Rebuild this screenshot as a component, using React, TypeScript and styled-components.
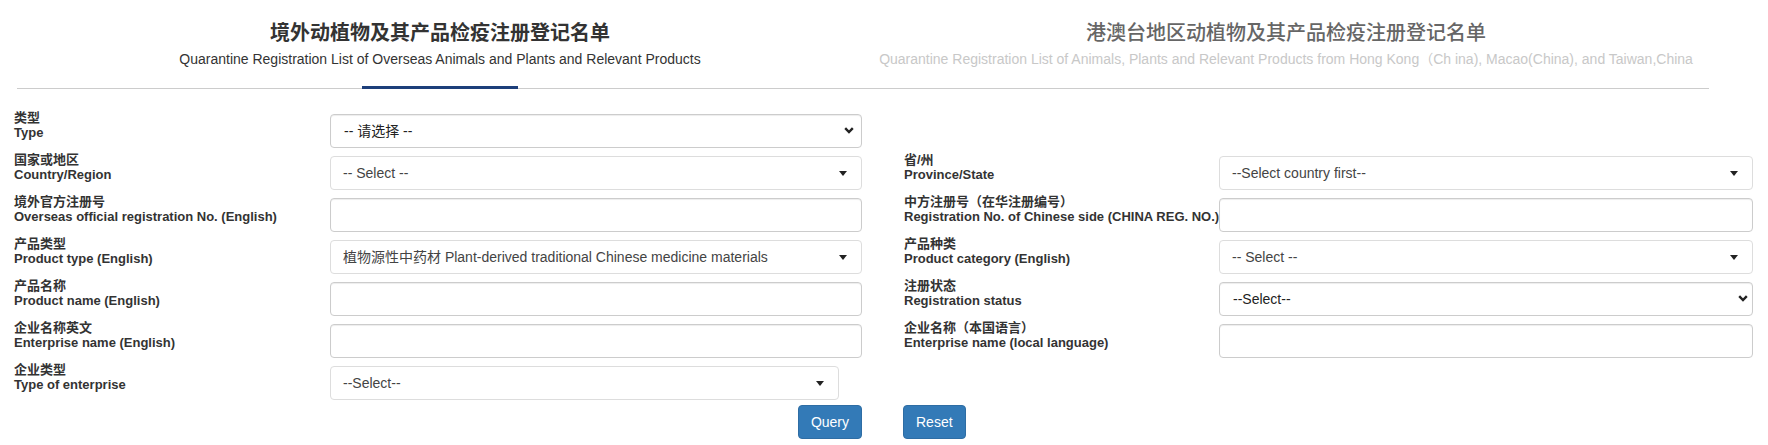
import styled, { createGlobalStyle } from 'styled-components';

const GlobalStyle = createGlobalStyle`
    * { box-sizing: border-box; }
    body {
        margin: 0;
        background: #fff;
        color: #333;
        font-family: "Liberation Sans", "Noto Sans CJK SC", sans-serif;
    }
`;

const Chevron = () => (
    <svg width="10" height="7" viewBox="0 0 10 7">
        <polyline points="1.2,1.2 5,5 8.8,1.2" fill="none" stroke="#222" strokeWidth="2.4" />
    </svg>
);

export default function App() {
    return (
        <Page>
            <GlobalStyle />
            <TabBar>
                <Tab active>
                    <TabTitle active>境外动植物及其产品检疫注册登记名单</TabTitle>
                    <TabSub active>Quarantine Registration List of Overseas Animals and Plants and Relevant Products</TabSub>
                </Tab>
                <Tab>
                    <TabTitle>港澳台地区动植物及其产品检疫注册登记名单</TabTitle>
                    <TabSub>
                        Quarantine Registration List of Animals, Plants and Relevant Products from Hong Kong（Ch ina), Macao(China), and Taiwan,China
                    </TabSub>
                </Tab>
            </TabBar>

            <Form>
                <Row>
                    <Field side="left">
                        <Label zh="类型" en="Type" />
                        <Control>
                            <NativeSelect defaultValue="">
                                <option value="">-- 请选择 --</option>
                            </NativeSelect>
                            <ChevronSlot right={8}>
                                <Chevron />
                            </ChevronSlot>
                        </Control>
                    </Field>
                    <Field side="right" />
                </Row>

                <Row>
                    <Field side="left">
                        <Label zh="国家或地区" en="Country/Region" />
                        <Control>
                            <ComboBox>-- Select --</ComboBox>
                        </Control>
                    </Field>
                    <Field side="right">
                        <Label zh="省/州" en="Province/State" />
                        <Control>
                            <ComboBox>--Select country first--</ComboBox>
                        </Control>
                    </Field>
                </Row>

                <Row>
                    <Field side="left">
                        <Label zh="境外官方注册号" en="Overseas official registration No. (English)" />
                        <Control>
                            <TextInput />
                        </Control>
                    </Field>
                    <Field side="right">
                        <Label zh="中方注册号（在华注册编号）" en="Registration No. of Chinese side (CHINA REG. NO.)" />
                        <Control>
                            <TextInput />
                        </Control>
                    </Field>
                </Row>

                <Row>
                    <Field side="left">
                        <Label zh="产品类型" en="Product type (English)" />
                        <Control>
                            <ComboBox>植物源性中药材 Plant-derived traditional Chinese medicine materials</ComboBox>
                        </Control>
                    </Field>
                    <Field side="right">
                        <Label zh="产品种类" en="Product category (English)" />
                        <Control>
                            <ComboBox>-- Select --</ComboBox>
                        </Control>
                    </Field>
                </Row>

                <Row>
                    <Field side="left">
                        <Label zh="产品名称" en="Product name (English)" />
                        <Control>
                            <TextInput />
                        </Control>
                    </Field>
                    <Field side="right">
                        <Label zh="注册状态" en="Registration status" />
                        <Control>
                            <NativeSelect defaultValue="">
                                <option value="">--Select--</option>
                            </NativeSelect>
                            <ChevronSlot right={5}>
                                <Chevron />
                            </ChevronSlot>
                        </Control>
                    </Field>
                </Row>

                <Row>
                    <Field side="left">
                        <Label zh="企业名称英文" en="Enterprise name (English)" />
                        <Control>
                            <TextInput />
                        </Control>
                    </Field>
                    <Field side="right">
                        <Label zh="企业名称（本国语言）" en="Enterprise name (local language)" />
                        <Control>
                            <TextInput />
                        </Control>
                    </Field>
                </Row>

                <Row>
                    <Field side="left">
                        <Label zh="企业类型" en="Type of enterprise" />
                        <Control width={509}>
                            <ComboBox>--Select--</ComboBox>
                        </Control>
                    </Field>
                    <Field side="right" />
                </Row>

                <ButtonRow>
                    <ButtonSlot side="left">
                        <Button type="button">Query</Button>
                    </ButtonSlot>
                    <ButtonSlot side="right">
                        <Button type="button">Reset</Button>
                    </ButtonSlot>
                </ButtonRow>
            </Form>
        </Page>
    );
}

const Label = ({ zh, en }: { zh: string; en: string }) => (
    <LabelWrap>
        <LabelLine>{zh}</LabelLine>
        <LabelLine>{en}</LabelLine>
    </LabelWrap>
);

const Page = styled.div`
    width: 1768px;
`;

const TabBar = styled.div`
    display: grid;
    grid-template-columns: 1fr 1fr;
    margin: 0 59px 0 17px;
    border-bottom: 1px solid #ccc;
`;

const Tab = styled.div<{ active?: boolean }>`
    position: relative;
    height: 88px;
    padding-top: 20px;
    text-align: center;
    white-space: nowrap;

    &::after {
        content: '';
        display: ${(p) => (p.active ? 'block' : 'none')};
        position: absolute;
        left: 50%;
        bottom: -1px;
        width: 156px;
        height: 3px;
        margin-left: -78px;
        background: #1d3f7a;
    }
`;

const TabTitle = styled.div<{ active?: boolean }>`
    font-family: "Noto Sans CJK SC", sans-serif;
    font-size: 20px;
    line-height: 24px;
    font-weight: ${(p) => (p.active ? 700 : 500)};
    color: ${(p) => (p.active ? '#333' : '#666')};
`;

const TabSub = styled.div<{ active?: boolean }>`
    margin-top: 5px;
    font-size: 14px;
    line-height: 20px;
    color: ${(p) => (p.active ? '#333' : '#c8c8c8')};
`;

const Form = styled.form`
    display: flex;
    flex-direction: column;
    gap: 4px;
    padding: 21px 15px 0 14px;
`;

const Row = styled.div`
    display: flex;
    gap: 42px;
`;

const Field = styled.div<{ side: 'left' | 'right' }>`
    flex: ${(p) => (p.side === 'left' ? '0 0 848px' : '1')};
    display: grid;
    grid-template-columns: ${(p) => (p.side === 'left' ? '316px' : '315px')} 1fr;
    align-items: start;
`;

const LabelWrap = styled.label`
    display: flex;
    flex-direction: column;
    font-size: 13px;
    line-height: 15px;
    font-weight: 700;
    color: #333;
    white-space: nowrap;
`;

const LabelLine = styled.span``;

const Control = styled.div<{ width?: number }>`
    position: relative;
    margin-top: 4px;
    height: 34px;
    width: ${(p) => (p.width ? `${p.width}px` : '100%')};
`;

const TextInput = styled.input`
    display: block;
    width: 100%;
    height: 34px;
    padding: 6px 12px;
    border: 1px solid #ccc;
    border-radius: 4px;
    box-shadow: inset 0 1px 1px rgba(0, 0, 0, 0.075);
    font-size: 14px;
    color: #555;
    outline: none;
`;

const NativeSelect = styled.select`
    display: block;
    width: 100%;
    height: 34px;
    padding: 6px 24px 6px 13px;
    border: 1px solid #ccc;
    border-radius: 4px;
    box-shadow: inset 0 1px 1px rgba(0, 0, 0, 0.075);
    background: #fff;
    appearance: none;
    font-family: "Liberation Sans", "Noto Sans CJK SC", sans-serif;
    font-size: 14px;
    color: #222;
    outline: none;
`;

const ChevronSlot = styled.span<{ right: number }>`
    position: absolute;
    top: 13px;
    right: ${(p) => p.right}px;
    display: flex;
    pointer-events: none;
`;

const ComboBox = styled.div`
    position: relative;
    height: 34px;
    padding: 0 30px 0 12px;
    border: 1px solid #ddd;
    border-radius: 4px;
    background: #fff;
    font-size: 14px;
    line-height: 32px;
    color: #444;
    white-space: nowrap;
    overflow: hidden;

    &::after {
        content: '';
        position: absolute;
        top: 14px;
        right: 14px;
        border-top: 5px solid #222;
        border-left: 4px solid transparent;
        border-right: 4px solid transparent;
    }
`;

const ButtonRow = styled.div`
    display: flex;
    gap: 41px;
    margin-top: 1px;
`;

const ButtonSlot = styled.div<{ side: 'left' | 'right' }>`
    flex: ${(p) => (p.side === 'left' ? '0 0 848px' : '1')};
    display: flex;
    justify-content: ${(p) => (p.side === 'left' ? 'flex-end' : 'flex-start')};
`;

const Button = styled.button`
    height: 34px;
    padding: 6px 12px;
    border: 1px solid #2e6da4;
    border-radius: 4px;
    background: #337ab7;
    color: #fff;
    font-family: "Liberation Sans", sans-serif;
    font-size: 14px;
    line-height: 20px;
    cursor: pointer;
`;
